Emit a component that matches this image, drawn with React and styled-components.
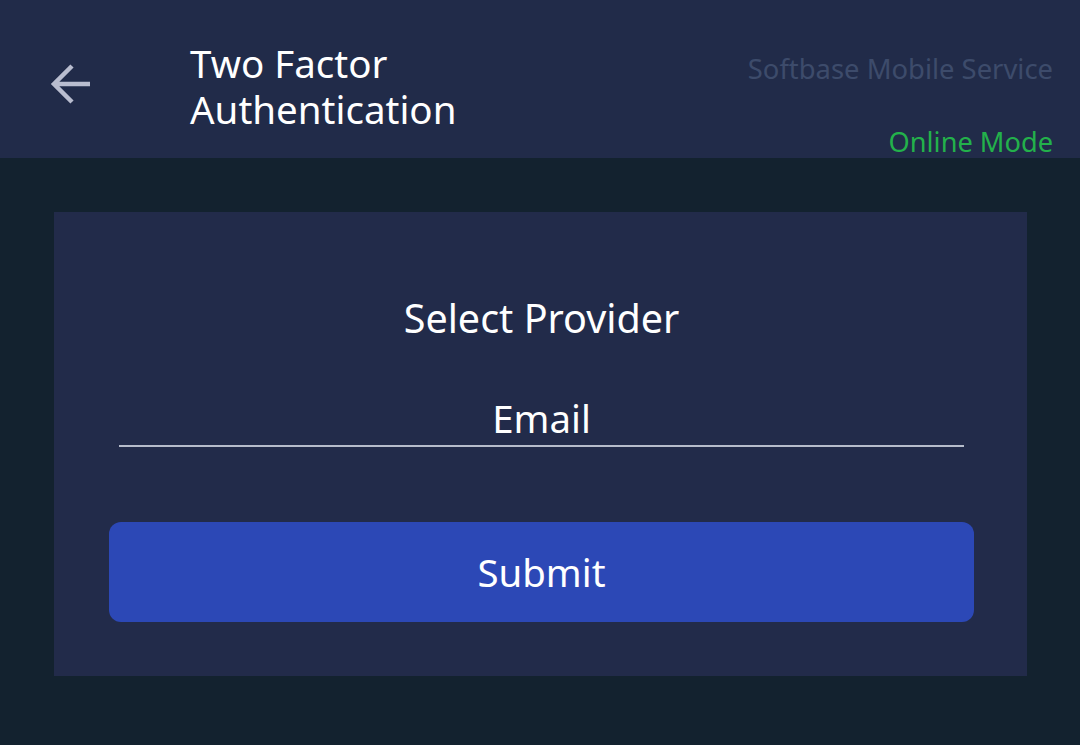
import React from "react";
import styled, { createGlobalStyle } from "styled-components";

const Global = createGlobalStyle`
  html, body {
    margin: 0;
    padding: 0;
    background: #13222f;
    font-family: "Noto Sans", "Open Sans", sans-serif;
  }
`;

const Page = styled.div`
  width: 1080px;
  height: 745px;
  background: #13222f;
  display: flex;
  flex-direction: column;
`;

const Header = styled.header`
  height: 158px;
  background: #212b49;
  display: flex;
  align-items: flex-start;
  padding: 0 27px 0 48px;
  box-sizing: border-box;
`;

const BackButton = styled.button`
  background: none;
  border: none;
  padding: 0;
  margin-top: 62px;
  width: 48px;
  height: 44px;
  color: #b9bdcf;
  cursor: pointer;
`;

const Title = styled.h1`
  margin: 40px 0 0 94px;
  font-size: 38.5px;
  font-weight: 400;
  line-height: 46px;
  color: #ffffff;
`;

const Status = styled.div`
  margin-left: auto;
  display: flex;
  flex-direction: column;
  align-items: flex-end;
  padding-top: 51px;
`;

const ServiceName = styled.span`
  font-size: 27.4px;
  color: #3d4b6b;
  line-height: 36px;
`;

const Mode = styled.span`
  margin-top: 37px;
  font-size: 27.2px;
  color: #23b14b;
  line-height: 36px;
`;

const Card = styled.main`
  margin: 54px 53px 0 54px;
  height: 464px;
  background: #222b4a;
  display: flex;
  flex-direction: column;
  align-items: center;
  padding: 0 53px 0 55px;
  box-sizing: border-box;
`;

const CardTitle = styled.h2`
  margin: 83px 0 0;
  font-size: 39.5px;
  font-weight: 400;
  line-height: 46px;
  color: #ffffff;
`;

const Select = styled.div`
  margin-top: 54px;
  width: 845px;
  text-align: center;
  font-size: 38.4px;
  line-height: 46px;
  color: #ffffff;
  padding-bottom: 4px;
  border-bottom: 2px solid #b6bccb;
`;

const SubmitButton = styled.button`
  margin-top: 75px;
  width: 865px;
  height: 100px;
  border: none;
  border-radius: 12px;
  background: #2c48b6;
  color: #ffffff;
  font-family: inherit;
  font-size: 38.4px;
  cursor: pointer;
`;

export default function App() {
  return (
    <>
      <Global />
      <Page>
        <Header>
          <BackButton aria-label="Back">
            <svg width="44" height="44" viewBox="0 0 44 44" fill="none">
              <path
                d="M40 22H6M22 4L4 22l18 18"
                stroke="currentColor"
                strokeWidth="4.5"
              />
            </svg>
          </BackButton>
          <Title>
            Two Factor
            <br />
            Authentication
          </Title>
          <Status>
            <ServiceName>Softbase Mobile Service</ServiceName>
            <Mode>Online Mode</Mode>
          </Status>
        </Header>
        <Card>
          <CardTitle>Select Provider</CardTitle>
          <Select>Email</Select>
          <SubmitButton>Submit</SubmitButton>
        </Card>
      </Page>
    </>
  );
}
